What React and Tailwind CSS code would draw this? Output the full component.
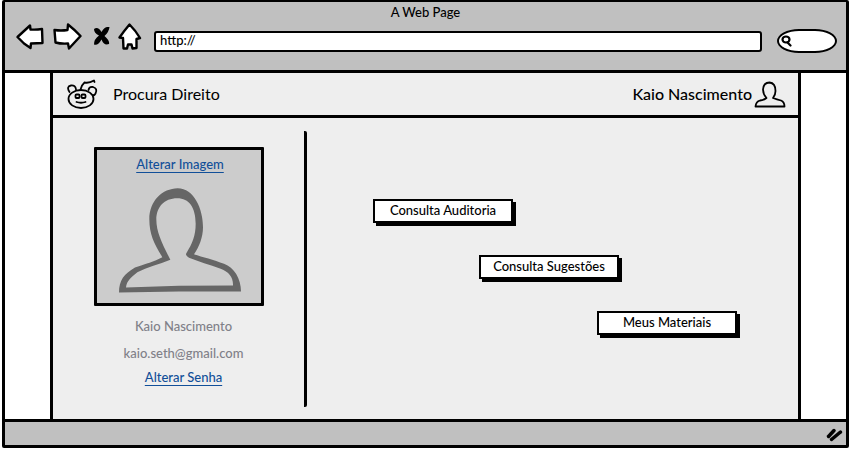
import React from "react";

function BackIcon() {
  return (
    <svg width="28" height="26" viewBox="0 0 28 26" fill="#fff" stroke="#000" strokeWidth="2.4" strokeLinejoin="round" aria-hidden="true">
      <path d="M1.5 13 L14 1.5 L14.5 5.500 Q20 6 26 5 L26.500 19 L15 19.500 L14.5 24 L8 19.500Z" />
    </svg>
  );
}

function ForwardIcon() {
  return (
    <svg width="29" height="28" viewBox="0 0 29 28" fill="#fff" stroke="#000" strokeWidth="2.4" strokeLinejoin="round" aria-hidden="true">
      <path d="M1.5 7 Q8 8 14.5 7 L15 1.500 Q22 7 27.500 13 L16 25.500 L15 20.500 Q8 21 2.500 19.500Z" />
    </svg>
  );
}

function StopIcon() {
  return (
    <svg width="18" height="20" viewBox="0 0 18 20" aria-hidden="true">
      <path d="M1 2 Q5 -1 8.500 5 Q12 -1 16.500 0 Q16 5 11.500 9 Q17 14 16 17 Q11 19 8.500 12.500 Q5 19 1 17.500 Q1 12 6 8.500 Q1 6 1 2Z" />
    </svg>
  );
}

function HomeIcon() {
  return (
    <svg width="24" height="28" viewBox="0 0 24 28" fill="#fff" stroke="#000" strokeWidth="2.4" strokeLinejoin="round" aria-hidden="true">
      <path d="M11.500 1.500 Q6 8 1.500 14.500 L5 15 L5.500 25.500 L9 25.500 L10 21.500 L13.500 21.500 L14.500 25.500 L18.500 25 L18.500 16 L22 15 Q18 8 11.500 1.500Z" />
    </svg>
  );
}

function AlienIcon() {
  return (
    <svg width="32" height="30" viewBox="0 0 32 30" fill="none" stroke="#000" strokeWidth="1.800" strokeLinecap="round" strokeLinejoin="round" aria-hidden="true">
      <path d="M2.500 13 Q-1 7.500 4 6.500 Q8.500 6 9 10.500" />
      <path d="M21.500 11 Q22 7.500 26 8 Q31 9.500 28.500 14.500 Q27 17 26 16" />
      <ellipse cx="14" cy="20" rx="12.500" ry="9" />
      <path d="M13.500 10.500 Q15 5.500 17.500 3.500 Q22 4.500 27 1.500 L27.500 3" />
      <rect x="8.500" y="15.500" width="4" height="3.500" rx="1" />
      <rect x="14.500" y="15.500" width="4" height="3.500" rx="1" />
      <path d="M9.500 23 Q14 24.500 18.500 23" />
    </svg>
  );
}

function UserIcon() {
  return (
    <svg width="32" height="27" viewBox="0 0 32 27" fill="none" stroke="#000" strokeWidth="1.800" strokeLinejoin="round" aria-hidden="true">
      <path d="M1.500 25.500 Q2 20.500 6 19.500 Q10 19 12.500 17 Q9 13 9 8.500 Q9.500 1.500 15.500 1.500 Q21.500 2 21.500 10 Q21.500 14 19 17 Q23 18.500 27 19.500 Q30.500 21 30.500 25.500Z" />
    </svg>
  );
}

function Portrait() {
  return (
    <svg width="122" height="105" viewBox="120 203 366 314" fill="#666" role="img" aria-label="Kaio Nascimento">
      <path
        fillRule="evenodd"
        d="M120 516 C120 480 135 460 168 441 C200 430 225 423 250 410 C225 370 211 340 211 297 C211 240 250 204 296 203 C345 203 372 265 372 320 C372 350 360 380 345 401 C370 410 405 417 435 430 C465 440 486 475 486 513 L300 513Z M141 501 L300 496 L462 495 C463 470 450 455 425 445 C390 432 360 424 330 412 Q318 405 322 398 C340 370 350 345 350 310 C350 260 330 233 295 233 C255 233 232 260 232 297 C232 335 250 370 274 418 C240 432 205 440 175 455 C155 472 143 480 141 501Z"
      />
    </svg>
  );
}

const actionClass =
  "h-[24px] w-[140px] border-2 border-black bg-white pb-[2px] text-[13px] font-medium leading-[18px] shadow-[3px_3px_0_#000]";

export default function App() {
  return (
    <div className="px-[2px] font-['Lato',sans-serif] text-black">
      <div className="flex min-h-[448px] flex-col rounded-[2px] border-x-[3px] border-b-[3px] border-t-2 border-black bg-white">
        <header className="border-b-[3px] border-black bg-[#c0c0c0] pb-[19px]">
          <h1 className="text-center text-[13px] font-medium leading-[21px]">A Web Page</h1>
          <div className="flex h-[28px] items-center pl-[11px] pr-[9px]">
            <button aria-label="Voltar"><BackIcon /></button>
            <button aria-label="Avançar" className="ml-[9px]"><ForwardIcon /></button>
            <button aria-label="Parar" className="ml-[11px]"><StopIcon /></button>
            <button aria-label="Início" className="ml-[7px]"><HomeIcon /></button>
            <input
              aria-label="Endereço"
              defaultValue="http://"
              className="ml-3 mt-[8px] h-[21px] min-w-0 flex-1 rounded-[3px] border-2 border-black bg-white px-1 pb-[2px] text-[13px] font-medium leading-[16px] outline-none"
            />
            <label className="ml-[15px] mt-[7px] flex h-[24px] w-[60px] items-center rounded-[22px/12px] border-2 border-black bg-white pl-[2px]">
              <svg width="11" height="12" viewBox="0 0 11 12" fill="none" stroke="#000" strokeWidth="2.2" strokeLinecap="round" aria-hidden="true">
                <ellipse cx="5" cy="4.500" rx="3.500" ry="3" />
                <path d="M6.500 7.500 L9.500 10.500" />
              </svg>
              <input type="search" aria-label="Pesquisar" className="w-0 min-w-0 flex-1 bg-transparent text-[13px] outline-none" />
            </label>
          </div>
        </header>

        <div className="mx-[45px] flex flex-1 flex-col border-x-[3px] border-black bg-[#eee]">
          <div className="flex h-[45px] items-center border-b-[3px] border-black pl-[14px] pr-[12px]">
            <AlienIcon />
            <h2 className="ml-[14px] text-[16px] leading-[24px]">Procura Direito</h2>
            <span className="ml-auto mr-[2px] text-[16px] font-medium leading-[24px]">Kaio Nascimento</span>
            <UserIcon />
          </div>

          <main className="flex flex-1 pb-3 pt-[13px]">
            <section className="flex w-[254px] shrink-0 flex-col items-center rounded-[2px] border-r-[3px] border-black pt-4 text-center text-[13px] font-medium leading-[20px]">
              <div className="flex h-[159px] w-[170px] flex-col items-center rounded-[1px] border-[3px] border-black bg-[#ccc] pl-[3px] pt-[4px]">
                <a href="#imagem" className="text-[#114f99] underline underline-offset-[3px]">Alterar Imagem</a>
                <div className="mt-[14px]"><Portrait /></div>
              </div>
              <div className="flex flex-col items-center pl-[10px]">
                <p className="mt-[10px] text-[#808088]">Kaio Nascimento</p>
                <p className="mt-[7px] text-[#808088]">kaio.seth@gmail.com</p>
                <a href="#senha" className="mt-1 text-[#114f99] underline underline-offset-[3px]">Alterar Senha</a>
              </div>
            </section>
            <nav className="flex flex-1 flex-col items-start gap-8 pt-[68px]">
              <button className={`${actionClass} ml-[66px]`}>Consulta Auditoria</button>
              <button className={`${actionClass} ml-[172px]`}>Consulta Sugestões</button>
              <button className={`${actionClass} ml-[290px]`}>Meus Materiais</button>
            </nav>
          </main>
        </div>

        <footer className="flex h-[26px] items-center justify-end border-t-[3px] border-black bg-[#c0c0c0] pr-[2px]">
          <svg width="18" height="16" viewBox="0 0 18 16" fill="none" stroke="#000" strokeWidth="3.500" strokeLinecap="round" aria-hidden="true">
            <path d="M2.500 10.500 L8 4.500" />
            <path d="M5.500 13.500 L14.500 6" />
          </svg>
        </footer>
      </div>
    </div>
  );
}
